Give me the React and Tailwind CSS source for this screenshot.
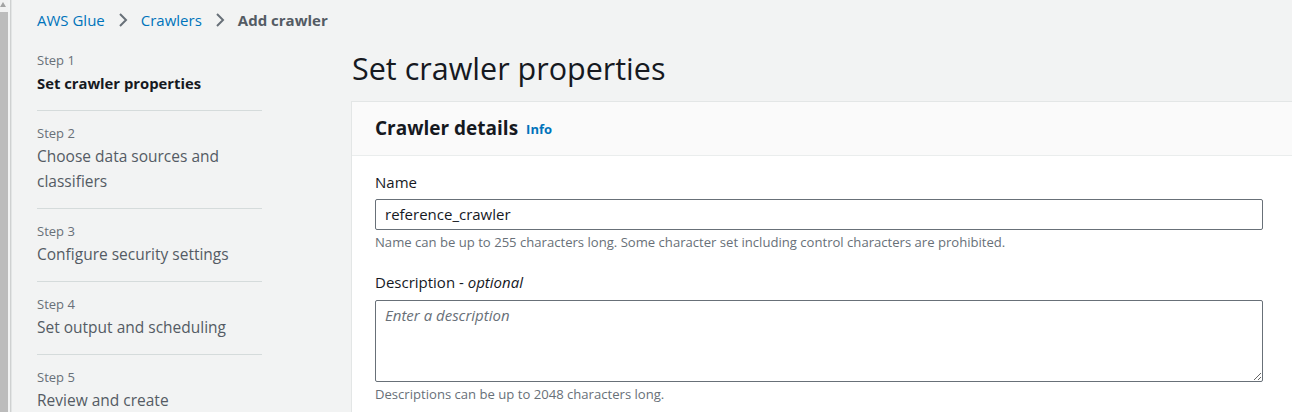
import React from "react";

const font = { fontFamily: '"Open Sans", "Noto Sans", Arial, sans-serif' };

function Chevron() {
  return (
    <svg width="12" height="16" viewBox="0 0 12 16" className="mx-[12px]" aria-hidden="true">
      <path d="M3 2 L9 8 L3 14" fill="none" stroke="#687078" strokeWidth="2" />
    </svg>
  );
}

const steps = [
  { n: 1, t: "Set crawler properties", active: true },
  { n: 2, t: "Choose data sources and classifiers" },
  { n: 3, t: "Configure security settings" },
  { n: 4, t: "Set output and scheduling" },
  { n: 5, t: "Review and create" },
];

export default function App() {
  return (
    <div className="flex h-[412px] w-[1292px] overflow-hidden bg-[#f2f3f3]" style={font}>
      {/* scrollbar strip */}
      <div className="flex w-[8px] shrink-0 flex-col">
        <div className="relative h-[12px] shrink-0 bg-[#f1f1f1]">
          <svg width="6" height="5" viewBox="0 0 6 5" className="absolute left-0 top-[2px]">
            <path d="M0 5 L3 0 L6 5 Z" fill="#a3a3a3" />
          </svg>
        </div>
        <div className="flex-1 bg-[#bcbcbc]" />
      </div>
      <div className="w-[2px] shrink-0" />
      <div className="w-[1px] shrink-0 bg-[#cfd1d1]" />
      <div className="w-[1px] shrink-0 bg-[#e3e5e5]" />

      <div className="flex min-w-0 flex-1 flex-col pl-[25px]">
        {/* breadcrumb */}
        <div className="flex h-[40px] shrink-0 items-center text-[15px]">
          <span className="text-[#0073bb]">AWS Glue</span>
          <Chevron />
          <span className="text-[#0073bb]">Crawlers</span>
          <Chevron />
          <span className="font-bold text-[#545b64]">Add crawler</span>
        </div>

        <div className="flex shrink-0">
          {/* steps nav */}
          <div className="w-[225px] shrink-0">
            {steps.map((s, i) => (
              <div
                key={s.n}
                className={
                  (i === 0 ? "pt-[12px] " : "pt-[14px] ") +
                  (i < steps.length - 1 ? "border-b border-[#d5dbdb] pb-[14px]" : "")
                }
              >
                <div className="text-[13px] leading-[16px] text-[#687078]">Step {s.n}</div>
                <div
                  className={
                    "mt-[3px] leading-[25px] " +
                    (s.active ? "text-[14.8px] font-bold text-[#16191f]" : "text-[15.5px] text-[#545b64]")
                  }
                >
                  {s.t}
                </div>
              </div>
            ))}
          </div>

          {/* main */}
          <div className="ml-[89px] min-w-0 flex-1">
            <h1 className="ml-[1px] mt-[9px] text-[30.5px] leading-[38px] text-[#16191f]">
              Set crawler properties
            </h1>
            <div className="mt-[14px] border-l border-t border-[#e3e6e6] bg-white">
              <div className="flex h-[54px] items-center border-b border-[#eaeded] bg-[#fafafa] px-[23px]">
                <span className="text-[19px] font-bold text-[#16191f]">Crawler details</span>
                <span className="ml-[8px] mt-[2px] text-[13px] font-bold text-[#0073bb]">Info</span>
              </div>
              <div className="pb-[20px] pl-[23px] pr-[29px] pt-[15px]">
                <div className="text-[15px] leading-[22px] text-[#16191f]">Name</div>
                <div className="mt-[6px] flex h-[31px] items-center rounded-[2px] border border-[#687078] bg-white px-[9px] text-[15px] text-[#16191f]">
                  reference_crawler
                </div>
                <div className="mt-[3px] text-[13.1px] leading-[18px] text-[#687078]">
                  Name can be up to 255 characters long. Some character set including control characters are prohibited.
                </div>
                <div className="mt-[20px] text-[15px] leading-[22px] text-[#16191f]">
                  Description - <span className="italic">optional</span>
                </div>
                <textarea
                  className="mt-[7px] block h-[82px] w-full rounded-[2px] border border-[#687078] bg-white px-[9px] py-[3px] text-[15px] text-[#16191f] placeholder:italic placeholder:text-[#687078] outline-none"
                  placeholder="Enter a description"
                  style={font}
                />
                <div className="mt-[3px] text-[13.1px] leading-[18px] text-[#687078]">
                  Descriptions can be up to 2048 characters long.
                </div>
              </div>
            </div>
          </div>
        </div>
      </div>
    </div>
  );
}
